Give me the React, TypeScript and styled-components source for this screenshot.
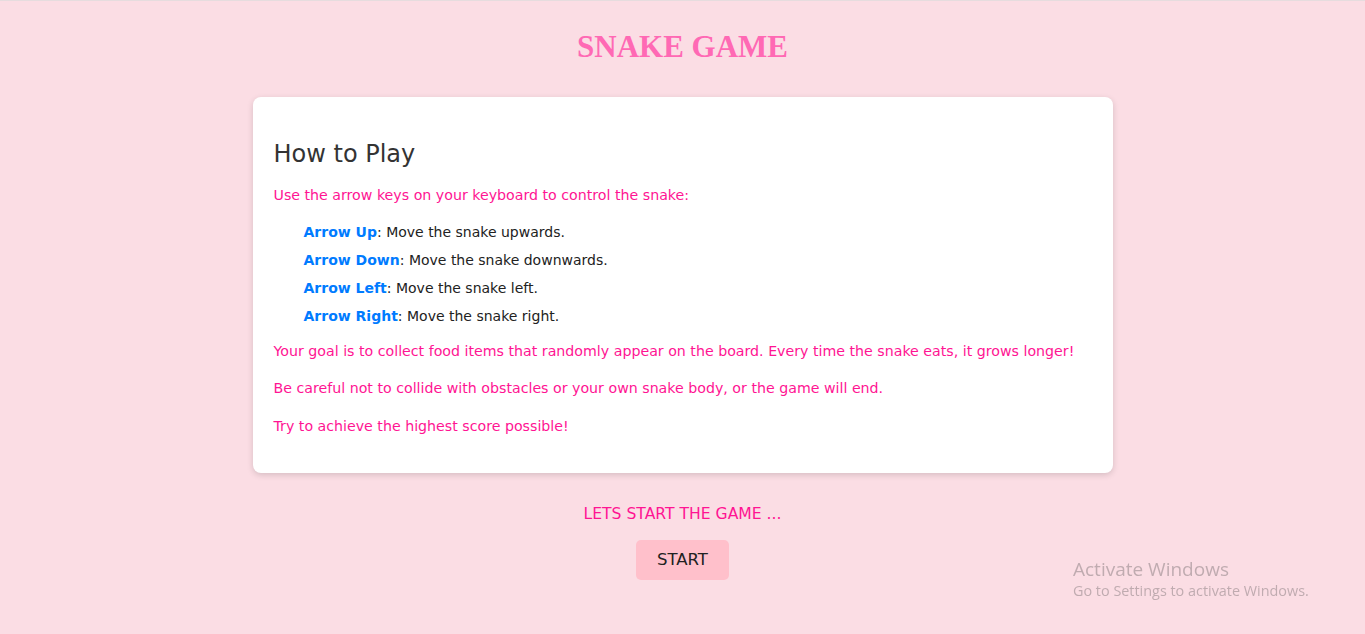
import React from "react";
import styled, { createGlobalStyle } from "styled-components";

const Global = createGlobalStyle`
  html, body { margin: 0; padding: 0; }
  body {
    background: #fbdde4;
    border-top: 1px solid #e6dcde;
    font-family: "DejaVu Sans", "Noto Sans", sans-serif;
    min-height: 633px;
  }
`;

const Page = styled.div`
  display: flex;
  flex-direction: column;
  align-items: center;
  padding-top: 27px;
`;

const Title = styled.h1`
  margin: 0 0 32px;
  font-family: "Liberation Serif", "DejaVu Serif", serif;
  font-weight: 700;
  font-size: 31px;
  line-height: 37px;
  color: #ff69b4;
`;

const Card = styled.section`
  display: flex;
  flex-direction: column;
  width: 860px;
  box-sizing: border-box;
  background: #fff;
  border-radius: 8px;
  box-shadow: 0 2px 6px rgba(0, 0, 0, 0.15);
  padding: 20px 21px;
`;

const Heading = styled.h2`
  margin: 23px 0 0;
  font-weight: 400;
  font-size: 24px;
  line-height: 29px;
  color: #333;
`;

const Text = styled.p<{ $tight?: boolean }>`
  margin: ${(p) => (p.$tight ? "12px" : "14.5px")} 0 0;
  font-size: 14.2px;
  line-height: 23px;
  color: #ff1493;
  &:last-child { margin-bottom: 15px; }
`;

const List = styled.ul`
  list-style: none;
  margin: 13px 0 0;
  padding-left: 30px;
`;

const Item = styled.li`
  font-size: 14px;
  line-height: 24px;
  margin-bottom: 4px;
  color: #222;
  &:last-child { margin-bottom: 0; }
`;

const Key = styled.strong`
  color: #007bff;
  font-weight: 700;
`;

const Prompt = styled.p`
  margin: 31px 0 16px;
  font-size: 15.6px;
  line-height: 20px;
  color: #ff1493;
`;

const StartButton = styled.button`
  height: 40px;
  padding: 0 21px;
  border: none;
  border-radius: 5px;
  background: #ffc0cb;
  color: #222;
  font-family: inherit;
  font-size: 16.5px;
  cursor: pointer;
`;

const Watermark = styled.div`
  position: fixed;
  left: 1073px;
  top: 557px;
  font-family: "Open Sans", "Noto Sans", sans-serif;
  color: rgba(120, 110, 112, 0.45);
`;

const WatermarkTitle = styled.div`
  font-size: 19px;
  line-height: 24px;
`;

const WatermarkSub = styled.div`
  font-size: 14.4px;
  line-height: 20px;
`;

const keys = [
  ["Arrow Up", "Move the snake upwards."],
  ["Arrow Down", "Move the snake downwards."],
  ["Arrow Left", "Move the snake left."],
  ["Arrow Right", "Move the snake right."],
];

export default function App() {
  return (
    <>
      <Global />
      <Page>
        <Title>SNAKE GAME</Title>
        <Card>
          <Heading>How to Play</Heading>
          <Text>Use the arrow keys on your keyboard to control the snake:</Text>
          <List>
            {keys.map(([k, d]) => (
              <Item key={k}>
                <Key>{k}</Key>: {d}
              </Item>
            ))}
          </List>
          <Text $tight>
            Your goal is to collect food items that randomly appear on the board. Every time the snake eats, it grows longer!
          </Text>
          <Text>Be careful not to collide with obstacles or your own snake body, or the game will end.</Text>
          <Text>Try to achieve the highest score possible!</Text>
        </Card>
        <Prompt>LETS START THE GAME ...</Prompt>
        <StartButton>START</StartButton>
      </Page>
      <Watermark>
        <WatermarkTitle>Activate Windows</WatermarkTitle>
        <WatermarkSub>Go to Settings to activate Windows.</WatermarkSub>
      </Watermark>
    </>
  );
}
